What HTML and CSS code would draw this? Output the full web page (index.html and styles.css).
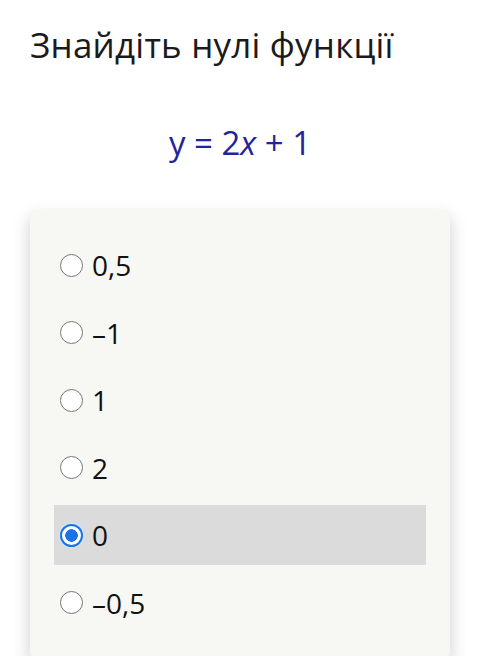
FILE: index.html
```html
<!DOCTYPE html>
<html lang="uk">
<head>
    <meta charset="UTF-8">
    <meta name="viewport" content="width=device-width, initial-scale=1.0">
    <title>Нулі функції</title>
    <link rel="stylesheet" href="styles.css">
</head>
<body>
    <h1 class="question">Знайдіть нулі функції</h1>

    <p class="formula">y = 2<i>x</i> + 1</p>

    <div class="answers">
        <label class="option"><input type="radio" name="ans"> 0,5</label>
        <label class="option"><input type="radio" name="ans"> –1</label>
        <label class="option"><input type="radio" name="ans"> 1</label>
        <label class="option"><input type="radio" name="ans"> 2</label>
        <label class="option selected"><input type="radio" name="ans" checked> 0</label>
        <label class="option"><input type="radio" name="ans"> –0,5</label>
    </div>
</body>
</html>
```

FILE: styles.css
```css
body {
    margin: 0;
    padding: 0 30px;
    font-family: "Open Sans", Arial, sans-serif;
    background: #ffffff;
    color: #1b1b1b;
}
.question {
    margin: 0;
    padding-top: 22px;
    font-size: 35px;
    font-weight: 400;
    line-height: 46px;
    letter-spacing: 0.2px;
}
.formula {
    margin: 0;
    padding-top: 52px;
    text-align: center;
    font-size: 33px;
    line-height: 46px;
    color: #24249a;
}
.formula i {
    font-style: italic;
}
.answers {
    margin-top: 44px;
    padding: 25px 24px 23px;
    background: #f7f8f4;
    border-radius: 3px;
    box-shadow: 0 8px 18px rgba(0, 0, 0, 0.2);
    display: flex;
    flex-direction: column;
    gap: 7.5px;
}
.option {
    height: 60px;
    display: flex;
    align-items: center;
    gap: 9px;
    padding-left: 6px;
    font-size: 28px;
    color: #111;
}
.option.selected {
    background: #dbdbdb;
}
.option input {
    appearance: none;
    margin: 0;
    width: 23px;
    height: 23px;
    border: 1.5px solid #767676;
    border-radius: 50%;
    background: #fff;
    flex-shrink: 0;
}
.option input:checked {
    border: 2px solid #1a73e8;
    background: radial-gradient(circle, #1a73e8 0 6px, #ffffff 6.5px);
    box-shadow: 0 0 0 1.5px #cfe3fb;
}
```
